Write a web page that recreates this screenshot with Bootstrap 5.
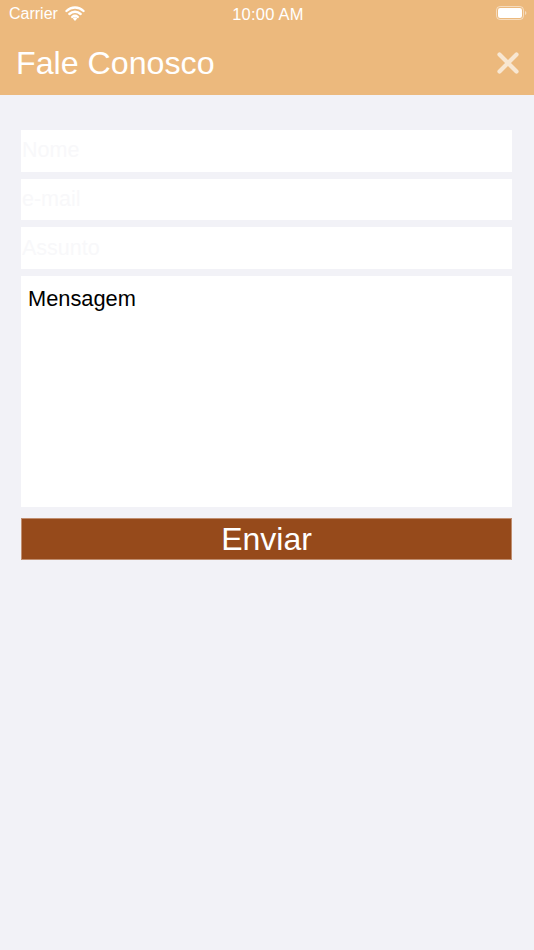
<!DOCTYPE html>
<html lang="pt">
<head>
<meta charset="utf-8">
<title>Fale Conosco</title>
<link rel="stylesheet" href="https://cdn.jsdelivr.net/npm/bootstrap@5.3.0/dist/css/bootstrap.min.css">
<style>
html, body { height: 100%; }
body { background: #f2f2f7; font-family: "Liberation Sans", Arial, sans-serif; color: #000; }
.app-head { background: #ecb97d; height: 95px; color: #fff; }
.status-row { height: 28px; padding: 0 7px 0 9px; font-size: 16px; }
.status-side { width: 120px; }
.wifi-gap { gap: 7px; }
.status-icon { margin-bottom: 2px; }
.status-time { font-size: 16.5px; letter-spacing: .25px; }
.title-row { height: 67px; padding: 3px 15px 0 16px; }
.page-title { font-size: 32.2px; font-weight: 400; margin: 0; line-height: 1; }
.close-btn { background: none; border: 0; padding: 0; line-height: 0; }
.form-wrap { padding: 35px 22px 0 21px; }
.stack-gap { gap: 7px; }
.field { height: 41.67px; border: 0; border-radius: 0; background: #fff; padding: 0 1px; font-size: 21.5px; width: 100%; outline: 0; font-family: inherit; }
.field::placeholder { color: #f8f8fa; opacity: 1; }
.msg { height: 231.5px; border: 0; border-radius: 0; background: #fff; padding: 9px 7px; font-size: 21.8px; line-height: 28px; width: 100%; outline: 0; resize: none; font-family: inherit; display: block; }
.msg::placeholder { color: #000; opacity: 1; }
.send-btn { margin-top: 10.5px; height: 42px; width: 100%; background: #964a1b; color: #fff; border: 0; border-radius: 0; font-size: 32px; line-height: 42px; padding: 0; font-family: inherit; box-shadow: inset 0 0 0 1px #c08e70; }
</style>
</head>
<body>
<header class="app-head d-flex flex-column">
  <div class="status-row d-flex align-items-center justify-content-between">
    <div class="status-side d-flex align-items-center wifi-gap">
      <span>Carrier</span>
      <svg class="status-icon" width="20" height="15" viewBox="0 0 20 15" aria-hidden="true">
        <path d="M1.5 5a12.2 12.2 0 0 1 17 0M4.4 8a8.2 8.2 0 0 1 11.2 0M7.3 10.9a4.2 4.2 0 0 1 5.4 0" fill="none" stroke="#fff" stroke-width="2.4" stroke-linecap="round"/>
        <path d="M10 15l-2.2-2.6a3.2 3.2 0 0 1 4.4 0z" fill="#fff"/>
      </svg>
    </div>
    <span class="status-time">10:00 AM</span>
    <div class="status-side d-flex justify-content-end">
      <svg class="status-icon" width="31" height="14" viewBox="0 0 31 14" aria-hidden="true">
        <rect x=".5" y=".5" width="27" height="13" rx="3.6" fill="none" stroke="#fff" stroke-opacity=".5"/>
        <rect x="2" y="2" width="24" height="10" rx="2.2" fill="#fff"/>
        <path d="M29 5v4a2 2 0 0 0 1.4-2 2 2 0 0 0-1.4-2z" fill="#fff" fill-opacity=".5"/>
      </svg>
    </div>
  </div>
  <div class="title-row d-flex align-items-center justify-content-between">
    <h1 class="page-title">Fale Conosco</h1>
    <button class="close-btn" type="button" aria-label="Fechar">
      <svg width="22" height="22" viewBox="0 0 22 22" aria-hidden="true">
        <path d="M2.5 2.5l17 17M19.5 2.5l-17 17" stroke="#f8e7d2" stroke-width="4.2" stroke-linecap="round"/>
      </svg>
    </button>
  </div>
</header>
<main class="form-wrap">
  <form class="d-flex flex-column stack-gap">
    <input class="field" type="text" placeholder="Nome">
    <input class="field" type="text" placeholder="e-mail">
    <input class="field" type="text" placeholder="Assunto">
    <textarea class="msg" placeholder="Mensagem"></textarea>
  </form>
  <button class="send-btn btn" type="button">Enviar</button>
</main>
<script src="https://cdn.jsdelivr.net/npm/bootstrap@5.3.0/dist/js/bootstrap.bundle.min.js"></script>
</body>
</html>
